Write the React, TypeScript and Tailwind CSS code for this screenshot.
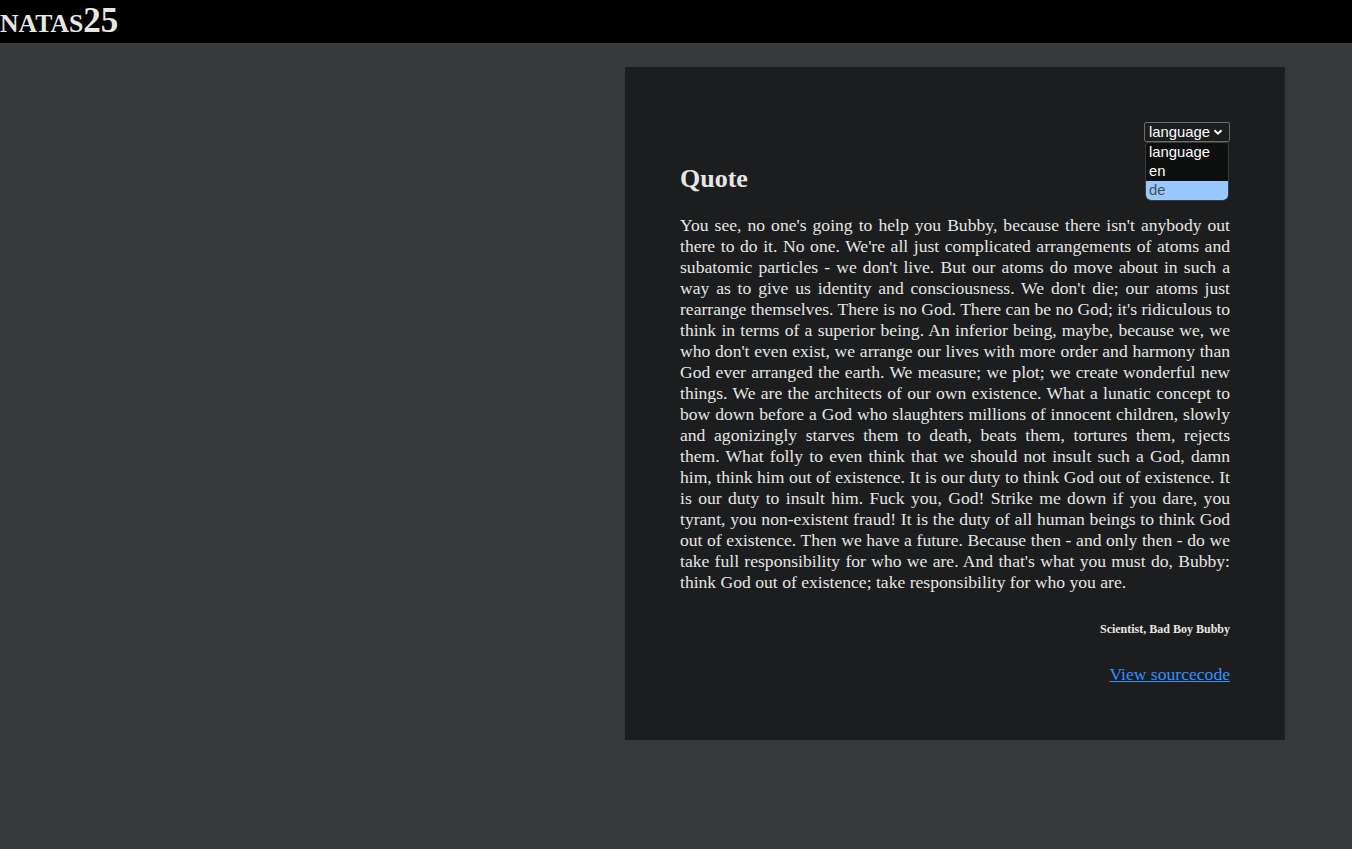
import React from "react";

const quote =
  "You see, no one's going to help you Bubby, because there isn't anybody out there to do it. No one. We're all just complicated arrangements of atoms and subatomic particles - we don't live. But our atoms do move about in such a way as to give us identity and consciousness. We don't die; our atoms just rearrange themselves. There is no God. There can be no God; it's ridiculous to think in terms of a superior being. An inferior being, maybe, because we, we who don't even exist, we arrange our lives with more order and harmony than God ever arranged the earth. We measure; we plot; we create wonderful new things. We are the architects of our own existence. What a lunatic concept to bow down before a God who slaughters millions of innocent children, slowly and agonizingly starves them to death, beats them, tortures them, rejects them. What folly to even think that we should not insult such a God, damn him, think him out of existence. It is our duty to think God out of existence. It is our duty to insult him. Fuck you, God! Strike me down if you dare, you tyrant, you non-existent fraud! It is the duty of all human beings to think God out of existence. Then we have a future. Because then - and only then - do we take full responsibility for who we are. And that's what you must do, Bubby: think God out of existence; take responsibility for who you are.";

export default function App() {
  return (
    <div
      className="min-h-screen bg-[#35393b] text-[#e8e6e3]"
      style={{ fontFamily: '"Liberation Serif", "Times New Roman", serif' }}
    >
      <div className="h-[43px] bg-black flex items-start">
        <div className="font-bold leading-none pt-[3px] whitespace-nowrap">
          <span className="text-[25.7px]">NATAS</span>
          <span className="text-[35px]">25</span>
        </div>
      </div>
      <div className="ml-[625px] mt-[24px] w-[660px] h-[673px] bg-[#1b1d1e] px-[55px] pt-[55px]">
        <div className="relative">
          <div className="flex justify-end">
            <div className="relative">
              <div
                className="h-[20px] w-[86px] border border-[#6b6b6b] rounded-[2px] bg-[#1b1d1e] flex items-center pl-[4px] text-[14.8px] text-white leading-none"
                style={{ fontFamily: '"Liberation Sans", Arial, sans-serif' }}
              >
                <span>language</span>
                <svg width="10" height="10" viewBox="0 0 10 10" className="ml-[3px]">
                  <path d="M1.5 3.2 L5 6.7 L8.5 3.2" stroke="white" strokeWidth="2" fill="none" />
                </svg>
              </div>
              <div
                className="absolute left-[1px] top-[20px] w-[84px] bg-[#0e0f0f] border border-[#3a3a3a] rounded-b-[6px] rounded-t-[3px] overflow-hidden text-[14.8px] leading-[19px] text-white z-10"
                style={{ fontFamily: '"Liberation Sans", Arial, sans-serif' }}
              >
                <div className="pl-[3px] h-[19px]">language</div>
                <div className="pl-[3px] h-[19px]">en</div>
                <div className="pl-[3px] h-[19px] bg-[#99c8ff] text-[#4a4f55]">de</div>
              </div>
            </div>
          </div>
          <h2 className="text-[26px] font-bold leading-[28px] mt-[23px]">Quote</h2>
          <p className="text-[17.6px] leading-[21px] text-justify mt-[22px]">{quote}</p>
          <div className="text-right text-[12px] font-bold mt-[29px] leading-[14px]">
            Scientist, Bad Boy Bubby
          </div>
          <div className="text-right mt-[28px] text-[17.6px] leading-[21px]">
            <a href="#" className="text-[#3391ff] underline">
              View sourcecode
            </a>
          </div>
        </div>
      </div>
    </div>
  );
}
